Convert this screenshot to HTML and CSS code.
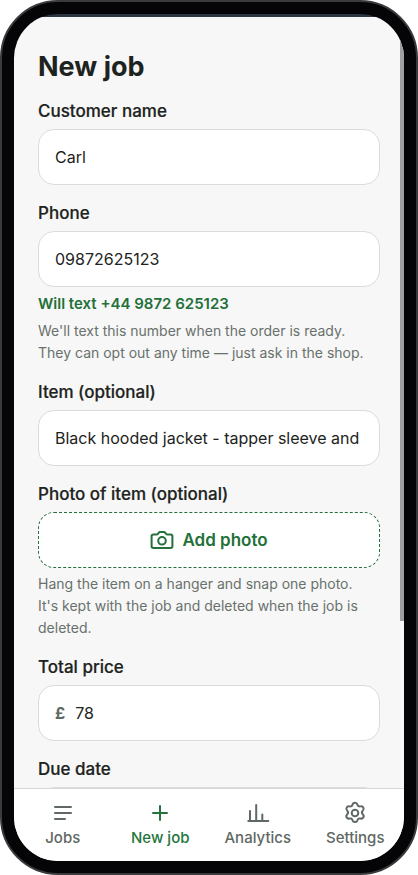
FILE: index.html
```html
<!DOCTYPE html>
<html lang="en">
<head>
<meta charset="utf-8">
<meta name="viewport" content="width=device-width, initial-scale=1">
<title>New job</title>
<link rel="stylesheet" href="styles.css">
</head>
<body>
<div class="phone">
  <div class="screen">
    <main class="content">
      <h1 class="title">New job</h1>
      <form class="form">
        <div class="field">
          <label class="label" for="customer">Customer name</label>
          <input class="control" id="customer" type="text" value="Carl">
        </div>
        <div class="field">
          <label class="label" for="phone">Phone</label>
          <input class="control" id="phone" type="tel" value="09872625123">
          <p class="confirm">Will text +44 9872 625123</p>
          <p class="hint">We'll text this number when the order is ready.<br>They can opt out any time — just ask in the shop.</p>
        </div>
        <div class="field">
          <label class="label" for="item">Item (optional)</label>
          <input class="control" id="item" type="text" value="Black hooded jacket - tapper sleeve and">
        </div>
        <div class="field">
          <label class="label" for="photo">Photo of item (optional)</label>
          <button class="photo" id="photo" type="button">
            <svg class="icon" viewBox="0 0 24 24" aria-hidden="true"><path d="M3.400 6.400h3.400c.7 0 1.100-.3 1.400-.8l.5-.7c.3-.6.8-.9 1.500-.9h3.600c.7 0 1.200.3 1.500.9l.5.7c.3.5.7.8 1.400.8h3.400c1 0 1.800.7 1.800 1.700v10.200c0 1-.8 1.700-1.800 1.700H3.400c-1 0-1.800-.7-1.800-1.700V8.100c0-1 .8-1.700 1.800-1.700z"/><circle cx="12" cy="12.800" r="3.800"/></svg>
            Add photo
          </button>
          <p class="hint">Hang the item on a hanger and snap one photo.<br>It's kept with the job and deleted when the job is deleted.</p>
        </div>
        <div class="field">
          <label class="label" for="price">Total price</label>
          <div class="control money">
            <span class="currency">£</span>
            <input class="amount" id="price" type="text" inputmode="decimal" value="78">
          </div>
        </div>
        <div class="field">
          <label class="label" for="due">Due date</label>
          <input class="control" id="due" type="text">
        </div>
      </form>
    </main>
    <nav class="tabs">
      <a class="tab" href="#jobs">
        <svg class="icon" viewBox="0 0 24 24" aria-hidden="true"><path d="M4 6h16M4 12h16M4 18h10"/></svg>
        Jobs
      </a>
      <a class="tab active" href="#new" aria-current="page">
        <svg class="icon" viewBox="0 0 24 24" aria-hidden="true"><path d="M12 5v14M5 12h14"/></svg>
        New job
      </a>
      <a class="tab" href="#analytics">
        <svg class="icon" viewBox="0 0 24 24" aria-hidden="true"><path d="M2.300 20h20M4 20V10M10.200 20V4M16.300 20v-6.500"/></svg>
        Analytics
      </a>
      <a class="tab" href="#settings">
        <svg class="icon" viewBox="0 0 24 24" aria-hidden="true"><circle cx="12" cy="12" r="3.300"/><path d="M9.500 3.700C9.800 2.500 10.800 1.800 12 1.800s2.200.7 2.500 1.900c.3 1.400 1.500 2.100 2.900 1.700 1.200-.3 2.300 0 2.900 1.100.6 1 .4 2.200-.5 3.100-1 1-1 2.700 0 3.700.9.900 1.100 2.100.5 3.100-.6 1.100-1.700 1.400-2.900 1.100-1.400-.4-2.600.3-2.900 1.700-.3 1.200-1.300 1.900-2.500 1.900s-2.200-.7-2.500-1.900c-.3-1.400-1.500-2.100-2.900-1.700-1.200.3-2.300 0-2.900-1.100-.6-1-.4-2.200.5-3.100 1-1 1-2.700 0-3.700-.9-.9-1.100-2.100-.5-3.100.6-1.100 1.700-1.400 2.900-1.100 1.400.4 2.600-.3 2.900-1.700z"/></svg>
        Settings
      </a>
    </nav>
    <div class="scrollbar"></div>
  </div>
</div>
</body>
</html>
```
FILE: styles.css
```css
* {
  box-sizing: border-box;
}

body {
  margin: 0;
  background: #fff;
  color: #1d2320;
  font-family: Inter, "Liberation Sans", sans-serif;
  font-size: 16px;
}

.phone {
  height: 100vh;
  padding: 12px;
  border: 2px solid #3a3a3d;
  border-radius: 58px;
  background: #050507;
}

.screen {
  position: relative;
  display: flex;
  flex-direction: column;
  height: 100%;
  overflow: hidden;
  border-radius: 44px;
  background: linear-gradient(#2c3541 3px, #f7f7f7 3px);
}

.content {
  flex: 1;
  min-height: 0;
  overflow: hidden;
  padding: 35px 24px 0;
}

.title {
  margin: 0 0 16px;
  font-size: 27px;
  font-weight: 700;
  line-height: 36px;
}

.form {
  display: flex;
  flex-direction: column;
  gap: 18px;
}

.field {
  display: flex;
  flex-direction: column;
}

.label {
  margin-bottom: 8px;
  font-size: 17px;
  font-weight: 500;
  line-height: 20px;
  -webkit-text-stroke: 0.2px currentColor;
}

.control {
  width: 100%;
  height: 56px;
  padding: 0 16px;
  border: 1px solid #d9dcd9;
  border-radius: 16px;
  background: #fff;
  color: inherit;
  font: inherit;
}

.money {
  display: flex;
  align-items: center;
  gap: 10px;
}

.currency {
  color: #5c6b62;
  font-weight: 700;
}

.amount {
  flex: 1;
  min-width: 0;
  padding: 0;
  border: 0;
  background: none;
  color: inherit;
  font: inherit;
}

.confirm,
.hint {
  margin: 5px 0 0;
}

.confirm {
  color: #23703a;
  font-size: 15px;
  font-weight: 600;
  line-height: 23px;
}

.hint {
  color: #69716c;
  font-size: 14px;
  line-height: 22px;
}

.icon {
  width: 24px;
  height: 24px;
  fill: none;
  stroke: currentColor;
  stroke-width: 2;
  stroke-linecap: round;
  stroke-linejoin: round;
}

.photo {
  display: flex;
  align-items: center;
  justify-content: center;
  gap: 8px;
  height: 56px;
  padding: 0;
  border: 1px dashed #23703a;
  border-radius: 16px;
  background: #fff;
  color: #23703a;
  font: inherit;
  font-size: 17px;
  font-weight: 600;
}

.tabs {
  display: flex;
  height: 73px;
  border-top: 1px solid #d5dad6;
  background: #fff;
}

.tab {
  flex: 1;
  display: flex;
  flex-direction: column;
  align-items: center;
  gap: 3px;
  padding-top: 12px;
  color: #5f6863;
  font-size: 15px;
  font-weight: 500;
  line-height: 20px;
  text-decoration: none;
}

.active {
  color: #23753d;
}

.scrollbar {
  position: absolute;
  top: 0;
  right: 0;
  width: 4px;
  height: 607px;
  background: #9e9f9e;
}
```
